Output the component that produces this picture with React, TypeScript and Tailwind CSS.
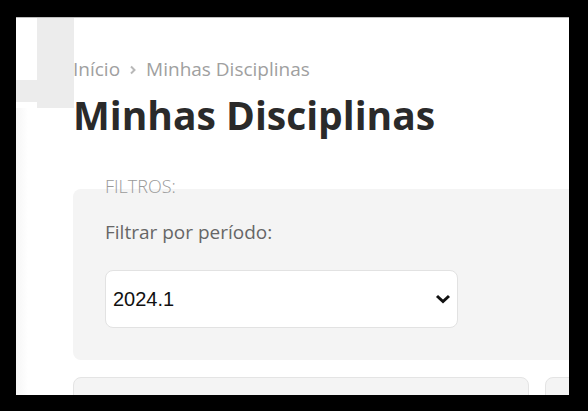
const Breadcrumb = () => (
  <nav className="flex items-center text-[19px] leading-none text-[#a0a0a0]">
    <span>Início</span>
    <svg width="8" height="10" viewBox="0 0 8 10" className="mx-[9px] text-[#b8b8b8]">
      <path d="M2 1.5 L5.5 5 L2 8.5" fill="none" stroke="currentColor" strokeWidth="2" />
    </svg>
    <span>Minhas Disciplinas</span>
  </nav>
);

const FilterPanel = () => (
  <fieldset className="relative mt-[55px] w-[520px] rounded-lg bg-[#f4f4f4] px-8 pb-8 pt-[34px]">
    <legend className="absolute left-8 top-[-12px] text-[18px] font-light leading-none text-[#9a9a9a]">
      FILTROS:
    </legend>
    <label className="block text-[19px] leading-none text-[#666]">Filtrar por período:</label>
    <div className="relative mt-[28px] h-[58px] w-[353px]">
      <select
        defaultValue="2024.1"
        className="h-full w-full appearance-none rounded-lg border border-[#e2e2e2] bg-white pl-[7px] text-[20px] text-[#111] outline-none"
        style={{ fontFamily: '"Liberation Sans", Arial, sans-serif' }}
      >
        <option>2024.1</option>
        <option>2023.2</option>
        <option>2023.1</option>
      </select>
      <svg
        width="16"
        height="10"
        viewBox="0 0 16 10"
        className="pointer-events-none absolute right-[7px] top-[24px]"
      >
        <path d="M2 2 L8 7.5 L14 2" fill="none" stroke="#111" strokeWidth="3" />
      </svg>
    </div>
  </fieldset>
);

const Card = () => (
  <div className="h-[60px] w-[456px] shrink-0 rounded-lg border border-[#e4e4e4] bg-[#f4f4f4]" />
);

export default function App() {
  return (
    <div className="h-[411px] w-[588px] bg-black pb-4 pl-4 pr-[19px] pt-[17px]" style={{ fontFamily: '"Open Sans", sans-serif' }}>
      <div className="relative h-full w-full overflow-hidden border-t border-[#bdbdbd] bg-white">
        {/* decorative gray blocks behind the header */}
        <div className="absolute left-[21px] top-0 h-[90px] w-[37px] bg-[#ececec]" />
        <div className="absolute left-0 top-[62px] h-[22px] w-[21px] bg-[#ececec]" />
        <div className="absolute left-0 top-[90px] h-full w-[12px] bg-gradient-to-r from-[#f6f6f6] to-white" />

        <div className="relative pl-[57px] pt-[42px]">
          <Breadcrumb />
          <h1 className="mt-[16px] text-[39px] font-bold leading-none text-[#2a2a2a]">Minhas Disciplinas</h1>
          <FilterPanel />
          <div className="mt-[17px] flex gap-4">
            <Card />
            <Card />
          </div>
        </div>
      </div>
    </div>
  );
}
